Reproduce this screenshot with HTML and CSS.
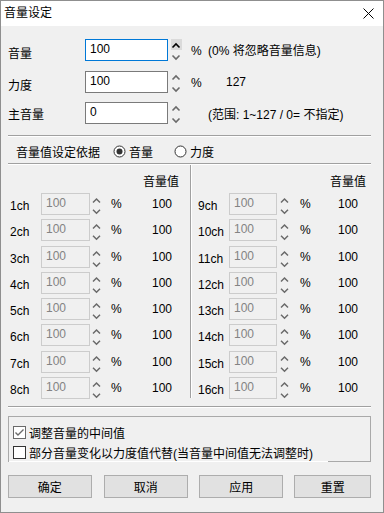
FILE: index.html
```html
<!DOCTYPE html>
<html lang="zh-CN">
<head>
<meta charset="utf-8">
<title>音量设定</title>
<link rel="stylesheet" href="styles.css">
</head>
<body>
<div class="window">
  <div class="titlebar">
    <span class="title">音量设定</span>
    <svg class="close" width="11" height="11" viewBox="0 0 11 11"><path d="M0.5 0.5L10.5 10.5M10.5 0.5L0.5 10.5" stroke="#000" stroke-width="1" fill="none"/></svg>
  </div>
  <div class="body">
    <div class="frow r1">
      <span class="flabel">音量</span>
      <span class="finput focus">100</span>
      <svg class="fspin" width="11" height="22" viewBox="0 0 11 22"><rect x="0" y="0" width="11" height="11" fill="#dadada"/><polyline points="1.5,8.5 5,5 8.5,8.5" fill="none" stroke="#000" stroke-width="1.6"/><polyline points="1.5,16.5 5,20 8.5,16.5" fill="none" stroke="#6a6a6a" stroke-width="1.6"/></svg>
      <span class="fpct">%</span>
      <span class="fnote">(0% 将忽略音量信息)</span>
    </div>
    <div class="frow r2">
      <span class="flabel">力度</span>
      <span class="finput">100</span>
      <svg class="fspin" width="11" height="22" viewBox="0 0 11 22"><polyline points="1.5,8.5 5,5 8.5,8.5" fill="none" stroke="#6a6a6a" stroke-width="1.6"/><polyline points="1.5,16.5 5,20 8.5,16.5" fill="none" stroke="#6a6a6a" stroke-width="1.6"/></svg>
      <span class="fpct">%</span>
      <span class="fval">127</span>
    </div>
    <div class="frow r3">
      <span class="flabel">主音量</span>
      <span class="finput">0</span>
      <svg class="fspin" width="11" height="22" viewBox="0 0 11 22"><polyline points="1.5,8.5 5,5 8.5,8.5" fill="none" stroke="#6a6a6a" stroke-width="1.6"/><polyline points="1.5,16.5 5,20 8.5,16.5" fill="none" stroke="#6a6a6a" stroke-width="1.6"/></svg>
      <span class="fpct"></span>
      <span class="fnote">(范围: 1~127 / 0= 不指定)</span>
    </div>

    <div class="sep s1"></div>

    <div class="basis">
      <span class="blabel">音量值设定依据</span>
      <span class="radio r-a"><svg width="13" height="13" viewBox="0 0 13 13"><circle cx="6.5" cy="6.5" r="5.5" fill="#fff" stroke="#333"/><circle cx="6.5" cy="6.5" r="3" fill="#333"/></svg><span>音量</span></span>
      <span class="radio r-b"><svg width="13" height="13" viewBox="0 0 13 13"><circle cx="6.5" cy="6.5" r="5.5" fill="#fff" stroke="#333"/></svg><span>力度</span></span>
    </div>

    <div class="sep"></div>

    <div class="channels">
      <div class="col left">
        <div class="hdr">音量值</div>
        <div class="rows">
          <div class="row"><span class="clabel">1ch</span><span class="cbox">100</span><svg class="cspin" width="9" height="22" viewBox="0 0 9 22"><polyline points="1,9.5 4.5,6 8,9.5"/><polyline points="1,16.8 4.5,20.3 8,16.8"/></svg><span class="cpct">%</span><span class="cval">100</span></div>
          <div class="row"><span class="clabel">2ch</span><span class="cbox">100</span><svg class="cspin" width="9" height="22" viewBox="0 0 9 22"><polyline points="1,9.5 4.5,6 8,9.5"/><polyline points="1,16.8 4.5,20.3 8,16.8"/></svg><span class="cpct">%</span><span class="cval">100</span></div>
          <div class="row"><span class="clabel">3ch</span><span class="cbox">100</span><svg class="cspin" width="9" height="22" viewBox="0 0 9 22"><polyline points="1,9.5 4.5,6 8,9.5"/><polyline points="1,16.8 4.5,20.3 8,16.8"/></svg><span class="cpct">%</span><span class="cval">100</span></div>
          <div class="row"><span class="clabel">4ch</span><span class="cbox">100</span><svg class="cspin" width="9" height="22" viewBox="0 0 9 22"><polyline points="1,9.5 4.5,6 8,9.5"/><polyline points="1,16.8 4.5,20.3 8,16.8"/></svg><span class="cpct">%</span><span class="cval">100</span></div>
          <div class="row"><span class="clabel">5ch</span><span class="cbox">100</span><svg class="cspin" width="9" height="22" viewBox="0 0 9 22"><polyline points="1,9.5 4.5,6 8,9.5"/><polyline points="1,16.8 4.5,20.3 8,16.8"/></svg><span class="cpct">%</span><span class="cval">100</span></div>
          <div class="row"><span class="clabel">6ch</span><span class="cbox">100</span><svg class="cspin" width="9" height="22" viewBox="0 0 9 22"><polyline points="1,9.5 4.5,6 8,9.5"/><polyline points="1,16.8 4.5,20.3 8,16.8"/></svg><span class="cpct">%</span><span class="cval">100</span></div>
          <div class="row"><span class="clabel">7ch</span><span class="cbox">100</span><svg class="cspin" width="9" height="22" viewBox="0 0 9 22"><polyline points="1,9.5 4.5,6 8,9.5"/><polyline points="1,16.8 4.5,20.3 8,16.8"/></svg><span class="cpct">%</span><span class="cval">100</span></div>
          <div class="row"><span class="clabel">8ch</span><span class="cbox">100</span><svg class="cspin" width="9" height="22" viewBox="0 0 9 22"><polyline points="1,9.5 4.5,6 8,9.5"/><polyline points="1,16.8 4.5,20.3 8,16.8"/></svg><span class="cpct">%</span><span class="cval">100</span></div>
        </div>
      </div>
      <div class="vdiv"></div>
      <div class="col right">
        <div class="hdr">音量值</div>
        <div class="rows">
          <div class="row"><span class="clabel">9ch</span><span class="cbox">100</span><svg class="cspin" width="9" height="22" viewBox="0 0 9 22"><polyline points="1,9.5 4.5,6 8,9.5"/><polyline points="1,16.8 4.5,20.3 8,16.8"/></svg><span class="cpct">%</span><span class="cval">100</span></div>
          <div class="row"><span class="clabel">10ch</span><span class="cbox">100</span><svg class="cspin" width="9" height="22" viewBox="0 0 9 22"><polyline points="1,9.5 4.5,6 8,9.5"/><polyline points="1,16.8 4.5,20.3 8,16.8"/></svg><span class="cpct">%</span><span class="cval">100</span></div>
          <div class="row"><span class="clabel">11ch</span><span class="cbox">100</span><svg class="cspin" width="9" height="22" viewBox="0 0 9 22"><polyline points="1,9.5 4.5,6 8,9.5"/><polyline points="1,16.8 4.5,20.3 8,16.8"/></svg><span class="cpct">%</span><span class="cval">100</span></div>
          <div class="row"><span class="clabel">12ch</span><span class="cbox">100</span><svg class="cspin" width="9" height="22" viewBox="0 0 9 22"><polyline points="1,9.5 4.5,6 8,9.5"/><polyline points="1,16.8 4.5,20.3 8,16.8"/></svg><span class="cpct">%</span><span class="cval">100</span></div>
          <div class="row"><span class="clabel">13ch</span><span class="cbox">100</span><svg class="cspin" width="9" height="22" viewBox="0 0 9 22"><polyline points="1,9.5 4.5,6 8,9.5"/><polyline points="1,16.8 4.5,20.3 8,16.8"/></svg><span class="cpct">%</span><span class="cval">100</span></div>
          <div class="row"><span class="clabel">14ch</span><span class="cbox">100</span><svg class="cspin" width="9" height="22" viewBox="0 0 9 22"><polyline points="1,9.5 4.5,6 8,9.5"/><polyline points="1,16.8 4.5,20.3 8,16.8"/></svg><span class="cpct">%</span><span class="cval">100</span></div>
          <div class="row"><span class="clabel">15ch</span><span class="cbox">100</span><svg class="cspin" width="9" height="22" viewBox="0 0 9 22"><polyline points="1,9.5 4.5,6 8,9.5"/><polyline points="1,16.8 4.5,20.3 8,16.8"/></svg><span class="cpct">%</span><span class="cval">100</span></div>
          <div class="row"><span class="clabel">16ch</span><span class="cbox">100</span><svg class="cspin" width="9" height="22" viewBox="0 0 9 22"><polyline points="1,9.5 4.5,6 8,9.5"/><polyline points="1,16.8 4.5,20.3 8,16.8"/></svg><span class="cpct">%</span><span class="cval">100</span></div>
        </div>
      </div>
    </div>

    <div class="sep s3"></div>

    <div class="group">
      <div class="chk"><svg width="13" height="13" viewBox="0 0 13 13"><rect x="0.5" y="0.5" width="12" height="12" fill="#fff" stroke="#6a6a6a"/><polyline points="2.5,6.5 5,9 10.5,3.5" fill="none" stroke="#6a6a6a" stroke-width="1.4"/></svg><span>调整音量的中间值</span></div>
      <div class="chk"><svg width="13" height="13" viewBox="0 0 13 13"><rect x="0.5" y="0.5" width="12" height="12" fill="#fff" stroke="#333"/></svg><span>部分音量变化以力度值代替(当音量中间值无法调整时)</span></div>
    </div>

    <div class="buttons">
      <div class="btn b1">确定</div>
      <div class="btn b2">取消</div>
      <div class="btn b3">应用</div>
      <div class="btn b4">重置</div>
    </div>
  </div>
</div>
</body>
</html>
```

FILE: styles.css
```css
* { box-sizing: border-box; }
html, body { margin: 0; padding: 0; }
body {
  width: 384px;
  height: 513px;
  overflow: hidden;
  background: #f0f0f0;
  font-family: "Liberation Sans", "Noto Sans CJK SC", sans-serif;
  font-size: 12px;
  color: #000;
}
.window {
  width: 384px;
  height: 513px;
  border: 1px solid #8f8f8f;
  background: #f0f0f0;
  display: flex;
  flex-direction: column;
}
.titlebar {
  flex: none;
  height: 25px;
  background: #fff;
  display: flex;
  align-items: center;
  justify-content: space-between;
  padding: 0 9px 0 3px;
}
.title { line-height: 25px; }
.close { display: block; }

.body { padding: 13px 12px 0 7px; }

/* top rows */
.frow { display: flex; align-items: flex-start; height: 22px; white-space: nowrap; }
.frow.r1 { margin-bottom: 10px; }
.frow.r2 { margin-bottom: 9px; }
.flabel { width: 77px; height: 22px; line-height: 30px; }
.r3 .flabel { line-height: 26px; }
.finput {
  width: 83px;
  height: 22px;
  border: 1px solid #7a7a7a;
  background: #fff;
  padding-left: 4px;
  line-height: 18px;
}
.finput.focus { border-color: #0078d7; }
.fspin { display: block; margin-left: 3px; }
.fpct { width: 17px; margin-left: 9px; line-height: 24px; }
.fnote { line-height: 24px; }
.r3 .fnote { line-height: 26px; }
.fval { margin-left: 18px; line-height: 22px; }

/* separators */
.sep { width: 363px; border-top: 1px solid #a0a0a0; border-bottom: 1px solid #fff; }
.sep.s1 { margin-top: 11px; }
.sep.s3 { margin-top: 7px; }

/* basis row */
.basis {
  height: 26px;
  display: flex;
  align-items: center;
  padding: 3px 0 0 8px;
  white-space: nowrap;
}
.blabel { margin-right: 13px; }
.radio { display: flex; align-items: center; }
.radio svg { display: block; margin-right: 3px; }
.radio.r-b { margin-left: 21px; }

/* channels */
.channels { display: flex; width: 363px; }
.col { display: flex; flex-direction: column; }
.col.left { width: 182px; }
.col.right { flex: 1; }
.vdiv { width: 2px; border-left: 1px solid #a0a0a0; border-right: 1px solid #fff; margin-bottom: 1px; }
.hdr { margin-top: 6px; height: 22px; line-height: 22px; text-align: right; }
.left .hdr { padding-right: 11px; }
.right .hdr { padding-right: 5px; }
.rows { display: grid; grid-template-rows: repeat(8, 22px); row-gap: 4.3px; }
.row { display: flex; align-items: flex-start; height: 22px; white-space: nowrap; }
.clabel { height: 22px; line-height: 27px; }
.left .clabel { width: 33px; padding-left: 2px; }
.right .clabel { width: 37px; padding-left: 6px; }
.cbox {
  height: 22px;
  border: 1px solid #cccccc;
  color: #838383;
  padding-left: 4px;
  line-height: 18px;
}
.left .cbox { width: 49px; }
.right .cbox { width: 48px; }
.cspin { display: block; }
.cspin polyline { fill: none; stroke: #6a6a6a; stroke-width: 1.5; }
.left .cspin { margin-left: 2px; }
.right .cspin { margin-left: 3px; }
.cpct { width: 30px; line-height: 22px; }
.left .cpct { margin-left: 10px; }
.right .cpct { margin-left: 11px; }
.cval { line-height: 22px; }
.left .cval { margin-left: 11px; }
.right .cval { margin-left: 8px; }

/* group box */
.group {
  margin-top: 8px;
  width: 363px;
  height: 46px;
  border: 1px solid #a9a9a9;
  border-bottom: none;
  background: linear-gradient(to right, #fff 319px, #a9a9a9 319px) left bottom / 100% 1px no-repeat, #f0f0f0;
  padding: 5px 0 0 4px;
}
.chk { display: flex; align-items: center; height: 20px; white-space: nowrap; }
.chk svg { display: block; margin-right: 3px; }

/* buttons */
.buttons { display: flex; margin-top: 13px; }
.btn {
  height: 23px;
  border: 1px solid #adadad;
  background: #e1e1e1;
  display: flex;
  align-items: center;
  justify-content: center;
}
.b1 { width: 84px; }
.b2 { width: 85px; margin-left: 12px; }
.b3 { width: 85px; margin-left: 11px; }
.b4 { width: 77px; margin-left: 11px; }
```
